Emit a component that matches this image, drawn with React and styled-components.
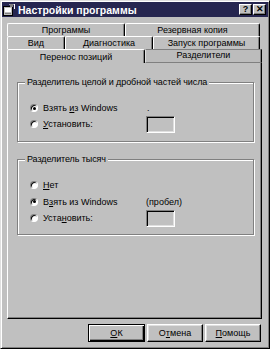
import React from 'react';
import styled, { createGlobalStyle, css } from 'styled-components';

const Global = createGlobalStyle`
  html, body { margin: 0; padding: 0; background: #c0c0c0; }
  body { font-family: "Liberation Sans", Arial, sans-serif; font-size: 9px; color: #000; }
  * { box-sizing: border-box; }
`;

const Window = styled.div`
  width: 270px;
  height: 349px;
  background: #c0c0c0;
  border: 1px solid;
  border-color: #dfdfdf #000 #000 #dfdfdf;
  box-shadow: inset 1px 1px #fff, inset -1px -1px #808080;
  padding: 1px;
  display: flex;
  flex-direction: column;
`;

const TitleBar = styled.div`
  height: 15px;
  background: #262650;
  display: flex;
  align-items: center;
  padding: 0 2px 0 1px;
  gap: 3px;
`;

const TitleText = styled.div`
  color: #fff;
  font-weight: bold;
  font-size: 10.5px;
  white-space: nowrap;
`;

const TitleButtons = styled.div`
  margin-left: auto;
  display: flex;
  gap: 1px;
`;

const TitleButton = styled.div`
  width: 13px;
  height: 11px;
  background: #c0c0c0;
  border: 1px solid;
  border-color: #fff #000 #000 #fff;
  box-shadow: inset -1px -1px #808080;
  display: flex;
  align-items: center;
  justify-content: center;
  font-weight: bold;
  font-size: 9px;
  line-height: 1;
  color: #000;
`;

const Tabs = styled.div`
  margin: 6px 6px 0 5px;
  display: flex;
  flex-direction: column;
`;

const TabRow = styled.div`
  display: flex;
  height: ${p => p.$h}px;
  margin-right: ${p => p.$mr || 0}px;
`;

const Tab = styled.div`
  width: ${p => p.$w}px;
  flex: none;
  background: #c0c0c0;
  border-top: 1px solid #fff;
  border-left: 1px solid #fff;
  border-right: 1px solid #000;
  box-shadow: inset -1px 0 #808080;
  border-radius: 2px 2px 0 0;
  display: flex;
  align-items: center;
  justify-content: center;
  white-space: nowrap;
  ${p => p.$active && css`
    border-top-color: #808080;
    border-left-color: #dfdfdf;
    border-bottom: 1px solid #808080;
    background: #bcbcbc;
    padding-bottom: 3px;
    border-radius: 0;
  `}
`;

const Panel = styled.div`
  margin: 0 6px 0 5px;
  height: 256px;
  border-left: 1px solid #fff;
  border-right: 1px solid #000;
  border-bottom: 1px solid #000;
  box-shadow: inset -1px -1px #808080;
  padding: 14px 7px 0 9px;
  display: flex;
  flex-direction: column;
  gap: 12px;
`;

const Group = styled.fieldset`
  margin: 0;
  border: 1px solid #808080;
  box-shadow: inset 1px 1px #fff, 1px 1px #fff;
  padding: ${p => p.$pt}px 0 ${p => p.$pb}px 12px;
  display: grid;
  grid-template-columns: 116px 1fr;
  grid-auto-rows: ${p => p.$row}px;
  align-items: center;
`;

const Legend = styled.legend`
  padding: 0 2px;
  margin-left: -5px;
  background: #c0c0c0;
  line-height: 11px;
  letter-spacing: -0.1px;
`;

const RadioLabel = styled.label`
  display: flex;
  align-items: center;
  gap: 5px;
  white-space: nowrap;
`;

const RadioCircle = styled.span`
  width: 8px;
  height: 8px;
  border-radius: 50%;
  background: #fff;
  border: 1px solid;
  border-color: #808080 #fff #fff #808080;
  box-shadow: inset 1px 1px #000;
  display: flex;
  align-items: center;
  justify-content: center;
  flex: none;
  &::after {
    content: '';
    width: 3px;
    height: 3px;
    border-radius: 50%;
    background: ${p => (p.$checked ? '#000' : 'transparent')};
  }
`;

const Value = styled.span`
  white-space: nowrap;
  padding-left: ${p => p.$pl || 0}px;
`;

const Field = styled.span`
  display: block;
  width: 29px;
  height: 17px;
  border: 1px solid;
  border-color: #808080 #fff #fff #808080;
  box-shadow: inset 1px 1px #000, inset -1px -1px #dfdfdf;
  background: #c0c0c0;
`;

const ButtonRow = styled.div`
  margin-top: 5px;
  display: flex;
  justify-content: flex-end;
  gap: 2px;
  padding-right: 7px;
`;

const Button = styled.div`
  width: ${p => p.$w}px;
  height: 18px;
  background: #c0c0c0;
  border: 1px solid;
  border-color: #fff #000 #000 #fff;
  box-shadow: inset -1px -1px #808080, inset 1px 1px #dfdfdf;
  display: flex;
  align-items: center;
  justify-content: center;
  ${p => p.$default && css`
    border: 1px solid #000;
    box-shadow: inset 1px 1px #fff, inset -1px -1px #000, inset -2px -2px #808080;
  `}
`;

const U = styled.span`
  text-decoration: underline;
`;

function Radio({ checked, children }) {
  return (
    <RadioLabel>
      <RadioCircle $checked={checked} />
      <span>{children}</span>
    </RadioLabel>
  );
}

function AppIcon() {
  return (
    <svg width="12" height="12" viewBox="0 0 12 12">
      <rect x="0.5" y="2.5" width="9" height="9" fill="#c0c0c0" stroke="#000" />
      <rect x="2" y="4" width="6" height="4" fill="#fff" />
      <rect x="2" y="9" width="6" height="1" fill="#808080" />
      <path d="M6 0 L11.5 0 L11.5 5" fill="none" stroke="#fff" />
      <rect x="7" y="0" width="3" height="3" fill="#808080" />
    </svg>
  );
}

export default function App() {
  return (
    <>
      <Global />
      <Window>
        <TitleBar>
          <AppIcon />
          <TitleText>Настройки программы</TitleText>
          <TitleButtons>
            <TitleButton>?</TitleButton>
            <TitleButton>✕</TitleButton>
          </TitleButtons>
        </TitleBar>
        <Tabs>
          <TabRow $h={13} $mr={2}>
            <Tab $w={118}>Программы</Tab>
            <Tab $w={135}>Резервная копия</Tab>
          </TabRow>
          <TabRow $h={13} $mr={2}>
            <Tab $w={58}>Вид</Tab>
            <Tab $w={88}>Диагностика</Tab>
            <Tab $w={107}>Запуск программы</Tab>
          </TabRow>
          <TabRow $h={14}>
            <Tab $w={138}>Перенос позиций</Tab>
            <Tab $w={117} $active>Разделители</Tab>
          </TabRow>
        </Tabs>
        <Panel>
          <Group $pt={12} $pb={9} $row={16}>
            <Legend>Разделитель целой и дробной частей числа</Legend>
            <Radio checked>Взять <U>и</U>з Windows</Radio>
            <Value $pl={1}>.</Value>
            <Radio><U>У</U>становить:</Radio>
            <Field />
          </Group>
          <Group $pt={12} $pb={7} $row={16.5}>
            <Legend>Разделитель тысяч</Legend>
            <Radio><U>Н</U>ет</Radio>
            <span />
            <Radio checked>В<U>з</U>ять из Windows</Radio>
            <Value>(пробел)</Value>
            <Radio>Уста<U>н</U>овить:</Radio>
            <Field />
          </Group>
        </Panel>
        <ButtonRow>
          <Button $w={57} $default><span><U>О</U>К</span></Button>
          <Button $w={56}><span>О<U>т</U>мена</span></Button>
          <Button $w={56}><span><U>П</U>омощь</span></Button>
        </ButtonRow>
      </Window>
    </>
  );
}
